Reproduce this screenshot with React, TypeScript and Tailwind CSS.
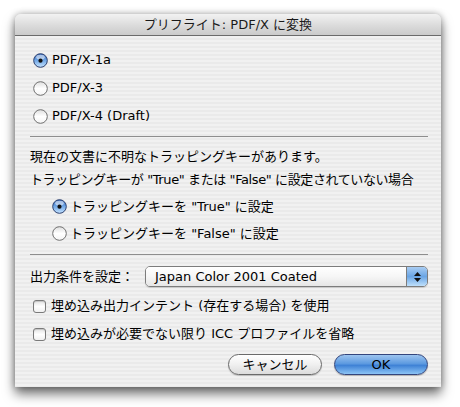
import React from "react";

const font = { fontFamily: '"DejaVu Sans", "Noto Sans CJK JP", sans-serif' };

function Radio({ on }: { on?: boolean }) {
  return (
    <svg width="15" height="15" viewBox="0 0 15 15" className="shrink-0">
      <defs>
        <linearGradient id="rOn" x1="0" y1="0" x2="0" y2="1">
          <stop offset="0" stopColor="#2f63b8" />
          <stop offset="0.45" stopColor="#6aa2e4" />
          <stop offset="1" stopColor="#c6e4ff" />
        </linearGradient>
        <linearGradient id="rOff" x1="0" y1="0" x2="0" y2="1">
          <stop offset="0" stopColor="#dedede" />
          <stop offset="0.5" stopColor="#ffffff" />
          <stop offset="1" stopColor="#f4f4f4" />
        </linearGradient>
      </defs>
      {on ? (
        <>
          <circle cx="7.5" cy="7.5" r="6.8" fill="url(#rOn)" stroke="#2b3f6e" strokeWidth="1" />
          <ellipse cx="7.5" cy="4.2" rx="4.3" ry="2.4" fill="#ffffff" opacity="0.55" />
          <circle cx="7.5" cy="7.7" r="2.1" fill="#111" />
        </>
      ) : (
        <circle cx="7.5" cy="7.5" r="6.8" fill="url(#rOff)" stroke="#6f6f6f" strokeWidth="1" />
      )}
    </svg>
  );
}

function Check() {
  return (
    <div className="w-[13px] h-[13px] shrink-0 rounded-[3px] border border-[#7a7a7a] bg-gradient-to-b from-[#e4e4e4] via-[#ffffff] to-[#f0f0f0] shadow-[inset_0_1px_1px_rgba(0,0,0,0.15)]" />
  );
}

export default function App() {
  return (
    <div className="w-[460px] h-[407px] bg-white overflow-hidden pt-[14px] pl-[15px]" style={font}>
      <div className="w-[426px] h-[373px] flex flex-col rounded-t-[6px] shadow-[0_7px_12px_rgba(0,0,0,0.55),0_0_7px_rgba(0,0,0,0.3)] bg-[#eeeeee]">
        {/* Title bar */}
        <div className="h-[22px] shrink-0 rounded-t-[6px] border-b border-[#6b6b6b] bg-[linear-gradient(to_bottom,#f2f2f2,#d9d9d9_60%,#cbcbcb)] flex items-center justify-center text-[13px] text-[#1a1a1a]">
          プリフライト: PDF/X に変換
        </div>
        {/* Body */}
        <div className="flex-1 flex flex-col pl-[15px] pr-[13px] pt-[10px] text-[13px] text-black whitespace-nowrap bg-[image:repeating-linear-gradient(to_bottom,#f1f1f1_0px,#f1f1f1_2px,#eaeaea_2px,#eaeaea_4px)]">
          <div className="h-[28px] flex items-center gap-[4px] pl-[3px]">
            <Radio on />
            <span>PDF/X-1a</span>
          </div>
          <div className="h-[28px] flex items-center gap-[4px] pl-[3px]">
            <Radio />
            <span>PDF/X-3</span>
          </div>
          <div className="h-[28px] flex items-center gap-[4px] pl-[3px]">
            <Radio />
            <span>PDF/X-4 (Draft)</span>
          </div>
          <div className="mt-[6px] h-px bg-[#8e8e8e]" />
          <div className="h-[23px] mt-[8px] flex items-center">現在の文書に不明なトラッピングキーがあります。</div>
          <div className="h-[23px] flex items-center tracking-[-0.4px]">
            トラッピングキーが "True" または "False" に設定されていない場合
          </div>
          <div className="h-[27px] mt-[2px] flex items-center gap-[3px] pl-[22px]">
            <Radio on />
            <span>トラッピングキーを "True" に設定</span>
          </div>
          <div className="h-[27px] flex items-center gap-[3px] pl-[22px]">
            <Radio />
            <span>トラッピングキーを "False" に設定</span>
          </div>
          <div className="mt-[7px] h-px bg-[#8e8e8e]" />
          <div className="mt-[11px] h-[21px] flex items-center">
            <span className="w-[115px] shrink-0">出力条件を設定：</span>
            <div className="flex-1 h-[21px] flex rounded-[5px] border border-[#7c7c7c] overflow-hidden shadow-[0_1px_1px_rgba(0,0,0,0.15)]">
              <div className="flex-1 flex items-center pl-[9px] bg-gradient-to-b from-[#ffffff] via-[#f6f6f6] to-[#e6e6e6]">
                Japan Color 2001 Coated
              </div>
              <div className="w-[21px] border-l border-[#7c7c7c] bg-gradient-to-b from-[#a9cdf3] via-[#6aa5e4] to-[#bfe0fb] flex flex-col items-center justify-center gap-[2px]">
                <svg width="7" height="4" viewBox="0 0 7 4"><path d="M3.5 0L7 4H0z" fill="#111" /></svg>
                <svg width="7" height="4" viewBox="0 0 7 4"><path d="M0 0h7L3.5 4z" fill="#111" /></svg>
              </div>
            </div>
          </div>
          <div className="mt-[5px] h-[28px] flex items-center gap-[5px] pl-[3px]">
            <Check />
            <span>埋め込み出力インテント (存在する場合) を使用</span>
          </div>
          <div className="h-[28px] flex items-center gap-[5px] pl-[3px]">
            <Check />
            <span>埋め込みが必要でない限り ICC プロファイルを省略</span>
          </div>
          <div className="mt-[6px] flex justify-end gap-[12px]">
            <div className="w-[94px] h-[21px] rounded-full border border-[#6a6a6a] bg-gradient-to-b from-[#ffffff] via-[#f0f0f0] to-[#dcdcdc] shadow-[0_1px_1px_rgba(0,0,0,0.2)] flex items-center justify-center">
              キャンセル
            </div>
            <div className="w-[94px] h-[21px] rounded-full border border-[#33457c] bg-[linear-gradient(to_bottom,#9cc4ef_0%,#5d9ae0_45%,#3f82d6_55%,#8cc4f5_100%)] shadow-[0_1px_1px_rgba(0,0,0,0.25)] flex items-center justify-center">
              OK
            </div>
          </div>
        </div>
      </div>
    </div>
  );
}
